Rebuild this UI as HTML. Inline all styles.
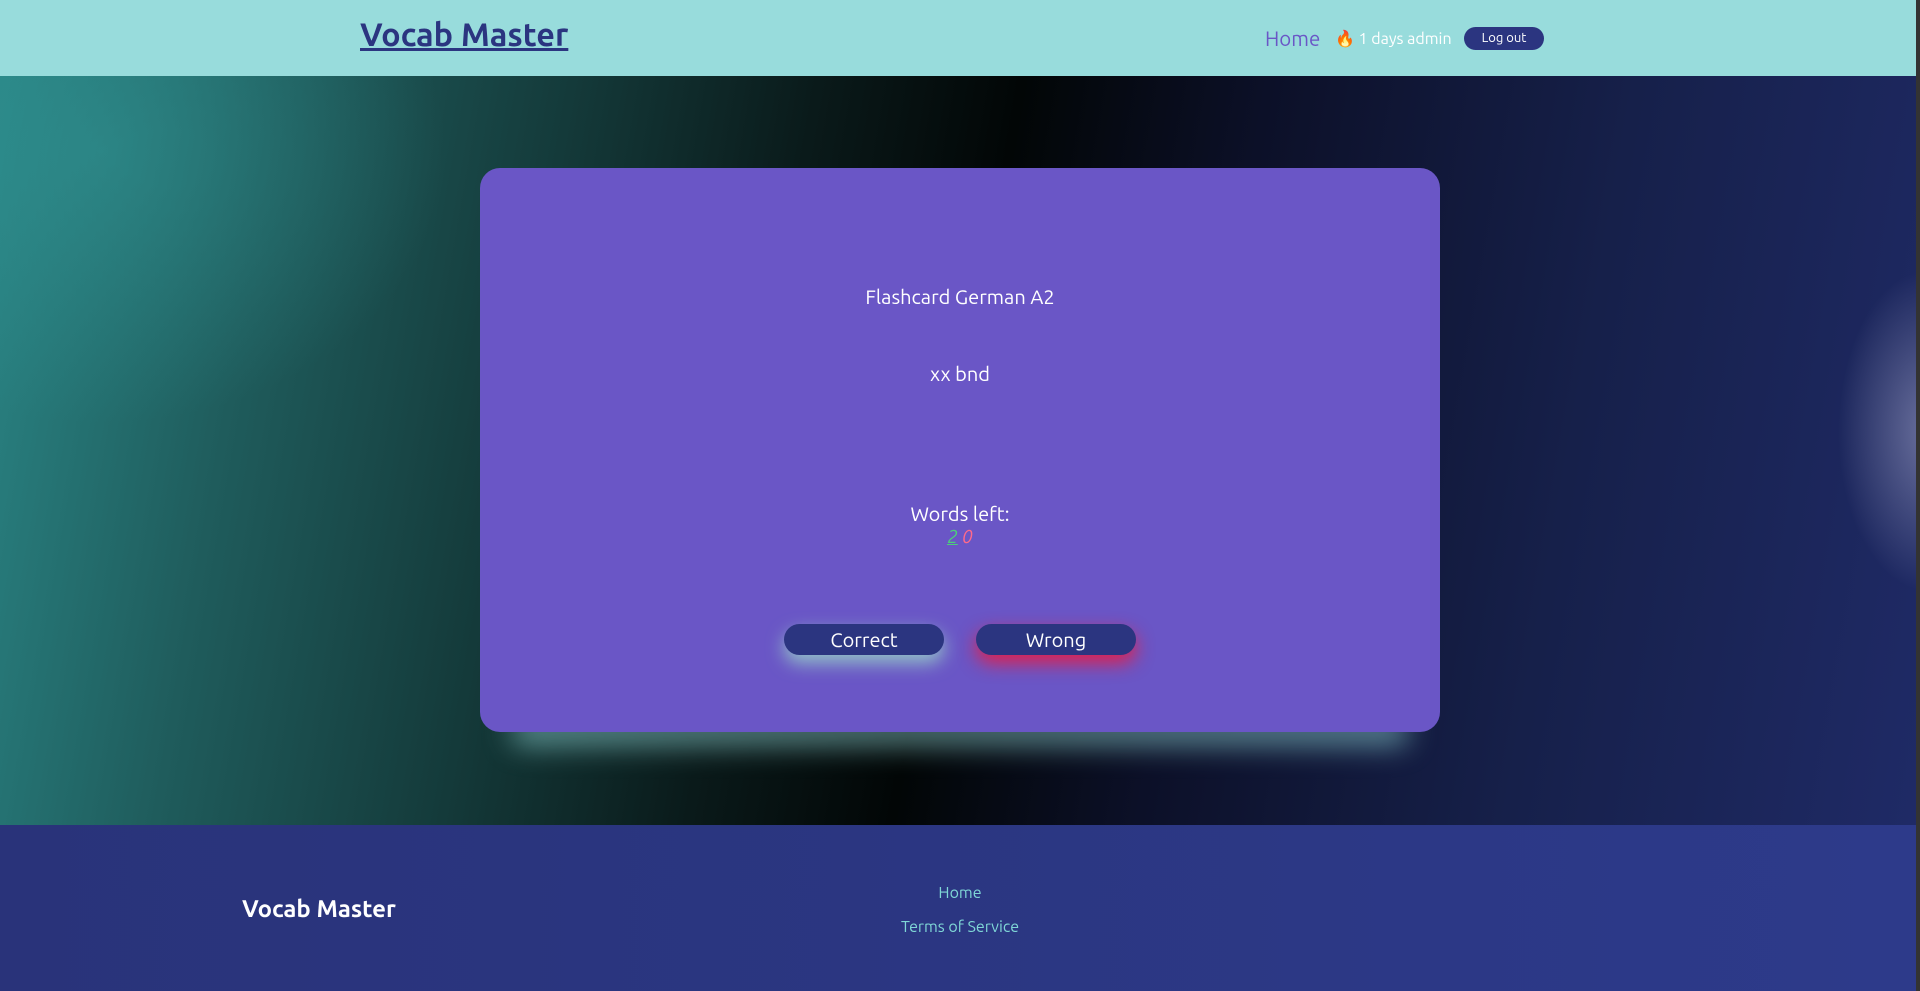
<!DOCTYPE html>
<html><head><meta charset="utf-8"><style>
*{margin:0;padding:0;box-sizing:border-box}
body{width:1920px;height:991px;overflow:hidden;font-family:"Ubuntu","Liberation Sans",sans-serif;position:relative;background:#000}
header{position:absolute;left:0;top:0;width:1916px;height:76px;background:#98dcdc}
.logo{position:absolute;left:360px;top:17px;font-size:32.5px;font-weight:bold;color:#2b3580;text-decoration:underline}
.home{position:absolute;left:1265px;top:27px;font-size:20.5px;color:#6a56c6}
.user{position:absolute;left:1335px;top:29px;font-size:16px;color:#fff}
.logout{position:absolute;left:1464px;top:27px;width:80px;height:23px;border-radius:12px;background:#2b3580;color:#fff;font-size:13px;text-align:center;line-height:23px}
main{position:absolute;left:0;top:76px;width:1916px;height:749px;overflow:hidden;
background:linear-gradient(100deg,#2a8585 0%,#1f5c5c 14%,#143a3a 28%,#0a1a1a 40%,#020606 50%,#0c1028 62%,#16204a 80%,#1f2a66 100%)}
.glow1{position:absolute;left:-250px;top:-200px;width:700px;height:550px;background:radial-gradient(ellipse,rgba(50,150,150,.5),transparent 70%)}
.glow2{position:absolute;left:1830px;top:180px;width:200px;height:350px;background:radial-gradient(ellipse,rgba(200,200,230,.45),transparent 65%)}
.shadow{position:absolute;left:510px;top:640px;width:900px;height:30px;background:rgba(150,220,220,.55);filter:blur(14px);border-radius:20px}
.card{position:absolute;left:480px;top:92px;width:960px;height:564px;border-radius:20px;background:#6a56c6;color:#fff;text-align:center}
.t1{position:absolute;left:0;right:0;top:117px;font-size:20px}
.t2{position:absolute;left:0;right:0;top:194px;font-size:20px}
.t3{position:absolute;left:0;right:0;top:334px;font-size:20px}
.t4{position:absolute;left:0;right:0;top:357px;font-size:19px;font-style:italic}
.btn{position:absolute;top:456px;width:160px;height:31px;border-radius:16px;background:#2b3580;color:#fff;font-size:20px;line-height:31px}
footer{position:absolute;left:0;top:825px;width:1916px;height:166px;background:linear-gradient(90deg,#29337a,#2d3a8a)}
.sb{position:absolute;left:1916px;top:0;width:4px;height:991px;background:#333}
</style></head><body>
<header><div class="logo">Vocab Master</div><div class="home">Home</div><div class="user">🔥 1 days admin</div><div class="logout">Log out</div></header>
<main><div class="glow1"></div><div class="glow2"></div><div class="shadow"></div>
<div class="card">
<div class="t1">Flashcard German A2</div>
<div class="t2">xx bnd</div>
<div class="t3">Words left:</div>
<div class="t4"><span style="color:#4ccf7a;text-decoration:underline">2</span> <span style="color:#ff6a8a">0</span></div>
<div class="btn" style="left:304px;box-shadow:0 8px 18px rgba(160,230,200,.75)">Correct</div>
<div class="btn" style="left:496px;box-shadow:0 8px 18px rgba(230,30,70,.95)">Wrong</div>
</div></main>
<footer>
<div style="position:absolute;left:242px;top:70px;font-size:24px;font-weight:bold;color:#fff">Vocab Master</div>
<div style="position:absolute;left:0;width:1920px;top:51px;text-align:center;font-size:16px;color:#7fd6d6;line-height:34px">Home<br>Terms of Service</div>
</footer>
<div class="sb"></div>
</body></html>
